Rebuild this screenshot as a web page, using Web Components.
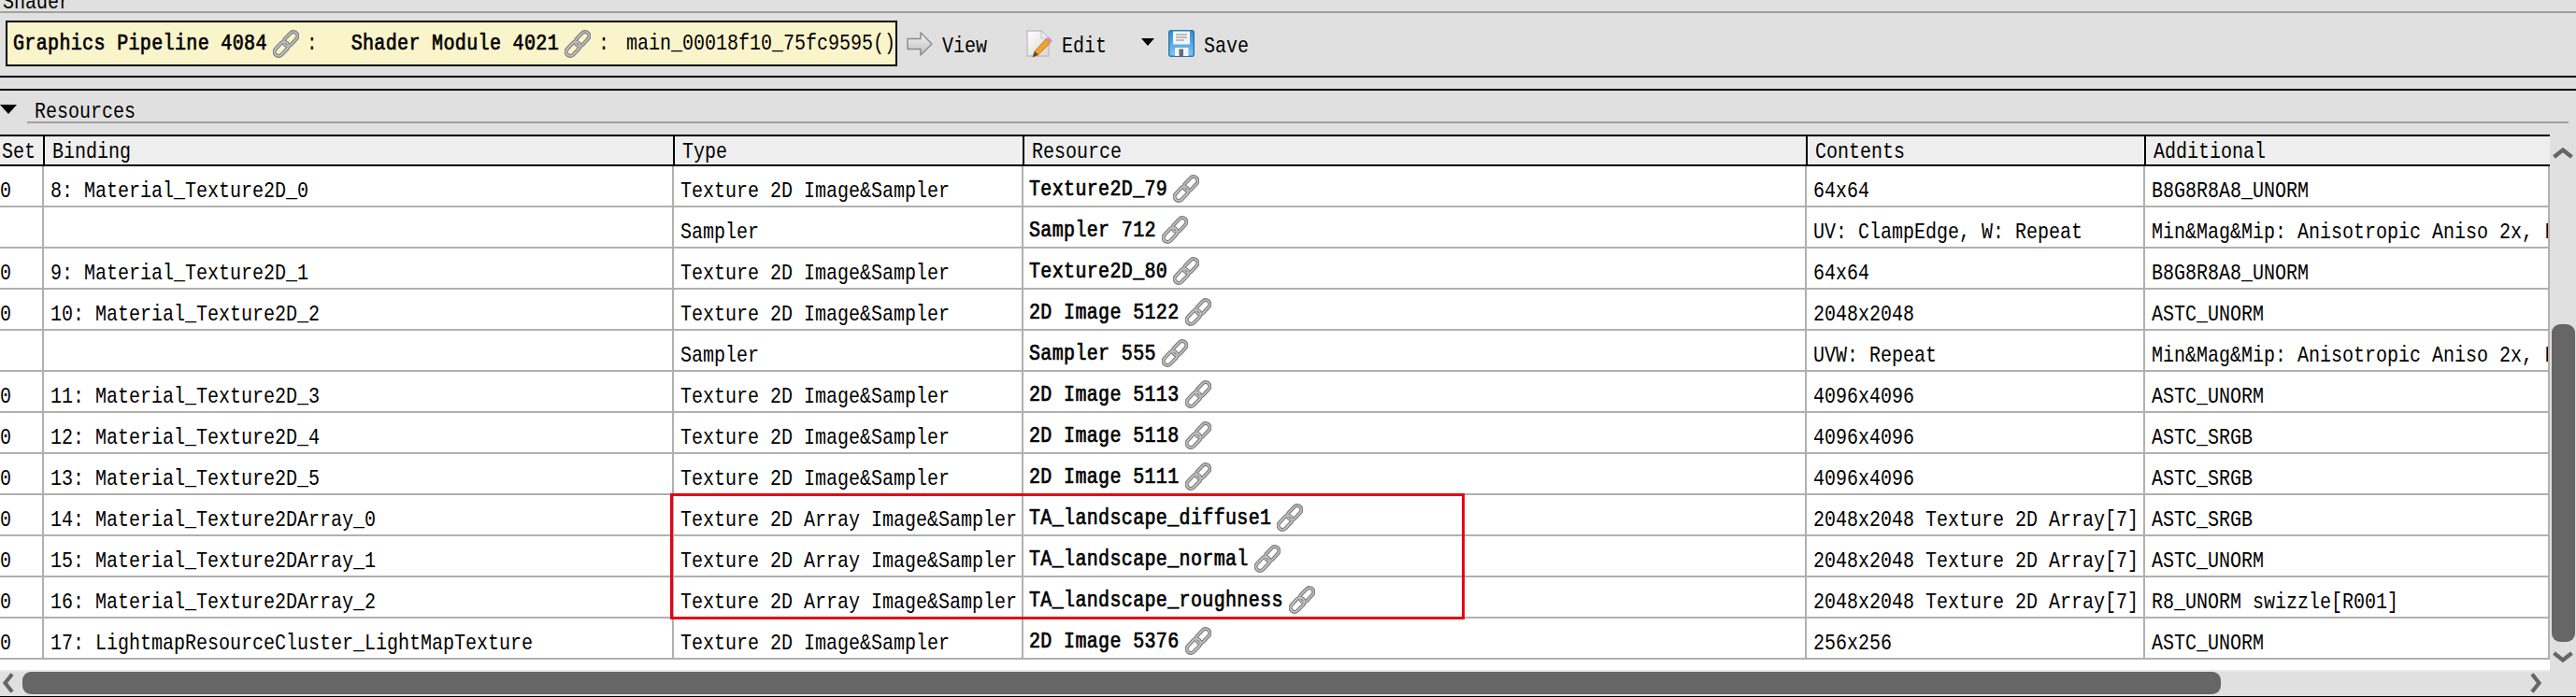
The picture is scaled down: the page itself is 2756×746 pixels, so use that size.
<!DOCTYPE html>
<html>
<head>
<meta charset="utf-8">
<style>
html,body{margin:0;padding:0;width:2756px;height:746px;overflow:hidden;background:#e0e0e0;}
body{font:20px "Liberation Mono",monospace;color:#000;}
</style>
</head>
<body>
<shader-panel>
  <shader-toolbar></shader-toolbar>
  <section-title>Resources</section-title>
  <resource-table></resource-table>
</shader-panel>
<script>
// text is drawn 20px wide and stretched, the mono fonts here are wider than the original one
const text_css = `
.t{display:inline-block;transform:scaleY(1.2);transform-origin:0 100%;white-space:pre;line-height:20px;}
.b{-webkit-text-stroke:.6px #000;letter-spacing:.35px;}
`;

class ChainIcon extends HTMLElement{
    constructor(){
        super();
        this.attachShadow({mode:'open'}).innerHTML = `
<style>
:host{display:inline-block;width:28px;height:30px;flex:none;}
svg{display:block;}
</style>
<svg width="28" height="30" viewBox="0 0 28 30">
  <g fill="none" transform="rotate(-47 14 15)">
    <rect x="-2" y="10.500" width="17.500" height="9" rx="4.500" stroke="#7c7c7c" stroke-width="4"/>
    <rect x="12.500" y="10.500" width="17.500" height="9" rx="4.500" stroke="#7c7c7c" stroke-width="4"/>
    <rect x="-2" y="10.500" width="17.500" height="9" rx="4.500" stroke="#c4c4c4" stroke-width="1.800"/>
    <rect x="12.500" y="10.500" width="17.500" height="9" rx="4.500" stroke="#bdbdbd" stroke-width="1.800"/>
  </g>
</svg>`;
    }
}
customElements.define('chain-icon', ChainIcon);

class ToolButton extends HTMLElement{
    constructor(){
        super();
        this.attachShadow({mode:'open'}).innerHTML = `
<style>
${text_css}
:host{display:flex;align-items:center;gap:10px;height:49px;}
.t{position:relative;top:5px;}
</style>
<slot name="icon"></slot><span class="t"><slot></slot></span>`;
    }
}
customElements.define('tool-button', ToolButton);

class ShaderToolbar extends HTMLElement{
    constructor(){
        super();
        this.attachShadow({mode:'open'}).innerHTML = `
<style>
${text_css}
:host{display:block;box-sizing:border-box;border-top:2px solid #a0a0a0;margin-top:12px;height:71px;border-bottom:2px solid #000;}
.bar{display:flex;align-items:center;padding:8px 0 0 6px;height:49px;}
.box{display:flex;align-items:center;box-sizing:border-box;width:954px;height:49px;background:#faf4cb;border:2px solid #000;padding-left:6px;}
.box .t{position:relative;top:2px;}
.box chain-icon{margin-left:6px;}
.colon{margin-left:8px;width:48px;}
.colon.two{width:30px;}
svg{display:block;}
.view{margin-left:10px;}
.edit{margin-left:42px;}
.drop{width:0;height:0;border:7px solid transparent;border-top:8px solid #000;border-bottom:0;margin:-4px 0 0 37px;}
.save{margin-left:15px;}
</style>
<div class="bar">
  <div class="box">
    <span class="t b">Graphics Pipeline 4084</span><chain-icon></chain-icon>
    <span class="t colon">:</span><span class="t b">Shader Module 4021</span><chain-icon></chain-icon>
    <span class="t colon two">:</span><span class="t">main_00018f10_75fc9595()</span>
  </div>
  <tool-button class="view"><svg slot="icon" width="28" height="26" viewBox="0 0 28 26"><defs><linearGradient id="av" x1="0" y1="0" x2="0" y2="1"><stop offset="0" stop-color="#f6f6f6"/><stop offset="1" stop-color="#bcbcbc"/></linearGradient></defs><path d="M1 7.500H15V1L27 13L15 25V18.500H1Z" fill="url(#av)" stroke="#8a8a8a" stroke-width="1.400" stroke-linejoin="round"/></svg>View</tool-button>
  <tool-button class="edit"><svg slot="icon" width="28" height="30" viewBox="0 0 28 30"><defs><linearGradient id="pg" x1="0" y1="0" x2="1" y2="1"><stop offset="0" stop-color="#fff"/><stop offset="1" stop-color="#d8d8d8"/></linearGradient></defs><path d="M1 1H16L24 9V28H1Z" fill="url(#pg)" stroke="#c0c0c0" stroke-width="1.400"/><path d="M16 1V9H24Z" fill="#ececec" stroke="#c0c0c0" stroke-width="1"/><path d="M7 29L9 23L21 10L25.500 14L13 26.500Z" fill="#f2a52a" stroke="#b9791a" stroke-width="1"/><path d="M21 10L23.500 7.500L28 11.500L25.500 14Z" fill="#d88cc4"/><path d="M7 29L9 23L13 26.500Z" fill="#5a4a3a"/></svg>Edit</tool-button>
  <div class="drop"></div>
  <tool-button class="save"><svg slot="icon" width="28" height="29" viewBox="0 0 28 29"><defs><linearGradient id="fl" x1="0" y1="0" x2="0" y2="1"><stop offset="0" stop-color="#2f8fd4"/><stop offset="1" stop-color="#7fc6f0"/></linearGradient></defs><rect x=".7" y=".7" width="26.600" height="27.600" rx="2" fill="url(#fl)" stroke="#2a78ad" stroke-width="1.400"/><rect x="5" y="1.500" width="18" height="14" fill="#f4f4f4"/><path d="M8 5H20M8 8H20M8 11H17" stroke="#858585" stroke-width="1"/><rect x="7" y="19" width="14.500" height="9" fill="#eef5fa"/><rect x="11.500" y="20.500" width="4.500" height="7.500" fill="#6b6b6b"/></svg>Save</tool-button>
</div>`;
    }
}
customElements.define('shader-toolbar', ShaderToolbar);

class SectionTitle extends HTMLElement{
    constructor(){
        super();
        this.attachShadow({mode:'open'}).innerHTML = `
<style>
${text_css}
:host{display:block;height:49px;box-sizing:border-box;margin-top:12px;border-top:2px solid #000;}
.row{display:flex;height:35px;}
.tri{width:0;height:0;border:9px solid transparent;border-top:10px solid #000;border-bottom:0;margin:15px 0 0 0;}
.lbl{margin-left:11px;flex:1;margin-right:8px;border-bottom:2px solid #a0a0a0;padding:13px 0 0 8px;height:20px;}
</style>
<div class="row"><div class="tri"></div><div class="lbl"><span class="t"><slot></slot></span></div></div>`;
    }
}
customElements.define('section-title', SectionTitle);

class ResRow extends HTMLElement{
    constructor(){
        super();
        this.attachShadow({mode:'open'});
    }
    connectedCallback(){
        const c = JSON.parse(this.getAttribute('cells'));
        const cell = (txt,i)=>{
            if(i==3) return `<div class="c res"><span class="t b">${txt}</span><chain-icon></chain-icon></div>`;
            return `<div class="c"><span class="t">${txt}</span></div>`;
        };
        this.shadowRoot.innerHTML = `
<style>
${text_css}
:host{display:grid;grid-template-columns:47px 674px 374px 838px 362px 431px;height:44px;box-sizing:border-box;border-bottom:2px solid #b0b0b0;border-right:2px solid #b0b0b0;background:#fff;overflow:hidden;}
.c{box-sizing:border-box;border-right:2px solid #b0b0b0;padding:17px 0 0 7px;overflow:hidden;height:42px;}
.c:nth-of-type(1){padding-left:0;}
.c:nth-of-type(6){border-right:0;}
.res{display:flex;padding:0 0 0 6px;align-items:flex-start;}
.res .t{margin-top:17px;}
.res chain-icon{margin:9px 0 0 6px;}
</style>
${c.map(cell).join('')}`;
    }
}
customElements.define('res-row', ResRow);

class ScrollArrow extends HTMLElement{
    connectedCallback(){
        const rot = {up:0,right:90,down:180,left:270}[this.getAttribute('dir')];
        this.attachShadow({mode:'open'}).innerHTML = `
<style>:host{display:block;width:24px;height:14px;flex:none;}svg{display:block;}</style>
<svg width="24" height="14" viewBox="0 0 24 14" style="transform:rotate(${rot}deg)"><path d="M2.500 11L12 3.500L21.500 11" fill="none" stroke="#666" stroke-width="4.200"/></svg>`;
    }
}
customElements.define('scroll-arrow', ScrollArrow);

class ResourceTable extends HTMLElement{
    constructor(){
        super();
        const std = 'Texture 2D Image&Sampler', arr = 'Texture 2D Array Image&Sampler', tex = 'Texture 2D Array[7]';
        const aniso = 'Min&Mag&Mip: Anisotropic Aniso 2x, LOD';
        const rows = [
            ['0','8: Material_Texture2D_0',std,'Texture2D_79','64x64','B8G8R8A8_UNORM'],
            ['','','Sampler','Sampler 712','UV: ClampEdge, W: Repeat',aniso],
            ['0','9: Material_Texture2D_1',std,'Texture2D_80','64x64','B8G8R8A8_UNORM'],
            ['0','10: Material_Texture2D_2',std,'2D Image 5122','2048x2048','ASTC_UNORM'],
            ['','','Sampler','Sampler 555','UVW: Repeat',aniso],
            ['0','11: Material_Texture2D_3',std,'2D Image 5113','4096x4096','ASTC_UNORM'],
            ['0','12: Material_Texture2D_4',std,'2D Image 5118','4096x4096','ASTC_SRGB'],
            ['0','13: Material_Texture2D_5',std,'2D Image 5111','4096x4096','ASTC_SRGB'],
            ['0','14: Material_Texture2DArray_0',arr,'TA_landscape_diffuse1','2048x2048 '+tex,'ASTC_SRGB'],
            ['0','15: Material_Texture2DArray_1',arr,'TA_landscape_normal','2048x2048 '+tex,'ASTC_UNORM'],
            ['0','16: Material_Texture2DArray_2',arr,'TA_landscape_roughness','2048x2048 '+tex,'R8_UNORM swizzle[R001]'],
            ['0','17: LightmapResourceCluster_LightMapTexture',std,'2D Image 5376','256x256','ASTC_UNORM']
        ];
        const body = rows.map(r=>`<res-row cells='${JSON.stringify(r.map(x=>x.replace(/&/g,'&amp;')))}'></res-row>`).join('');
        const heads = ['Set','Binding','Type','Resource','Contents','Additional'];
        this.attachShadow({mode:'open'}).innerHTML = `
<style>
${text_css}
:host{display:grid;grid-template-columns:2728px 28px;grid-template-rows:573px 28px;height:602px;box-sizing:border-box;position:relative;border-bottom:1px solid #000;}
.main{background:#fff;overflow:hidden;border-top:2px solid #000;}
.head{display:grid;grid-template-columns:48px 674px 374px 838px 362px 432px;height:32px;box-sizing:border-box;background:#efefef;border-bottom:2px solid #000;}
.head div{box-sizing:border-box;border-right:2px solid #000;padding:7px 0 0 8px;height:30px;}
.head div:first-child{padding-left:2px;}
.head div:last-child{border-right:0;}
.vbar{display:flex;flex-direction:column;align-items:center;padding-top:13px;}
.vthumb{width:25px;height:340px;margin-top:176px;background:#666;border-radius:9px;flex:none;}
.vbar scroll-arrow:last-child{margin-top:9px;}
.hbar{display:flex;align-items:flex-start;border-top:2px solid #eaeaea;box-sizing:border-box;height:28px;}
.hbar .a{width:18px;height:24px;display:flex;justify-content:center;align-items:center;flex:none;}
.hbar scroll-arrow{margin:0 -5px;}
.hthumb{width:2352px;height:24px;margin-left:6px;background:#666;border-radius:9px;flex:none;}
.hbar .end{margin-left:328px;}
.mark{position:absolute;left:717px;top:384px;width:850px;height:135px;box-sizing:border-box;border:3px solid #e60012;pointer-events:none;}
</style>
<div class="main">
  <div class="head">${heads.map(h=>`<div><span class="t">${h}</span></div>`).join('')}</div>
  ${body}
</div>
<div class="vbar"><scroll-arrow dir="up"></scroll-arrow><div class="vthumb"></div><scroll-arrow dir="down"></scroll-arrow></div>
<div class="hbar"><div class="a"><scroll-arrow dir="left"></scroll-arrow></div><div class="hthumb"></div><div class="a end"><scroll-arrow dir="right"></scroll-arrow></div></div>
<div></div>
<div class="mark"></div>`;
    }
}
customElements.define('resource-table', ResourceTable);

class ShaderPanel extends HTMLElement{
    constructor(){
        super();
        this.attachShadow({mode:'open'}).innerHTML = `
<style>
${text_css}
:host{display:block;width:2756px;height:746px;overflow:hidden;position:relative;}
.cap{height:0;padding-left:3px;}
.cap .t{position:relative;top:-7px;}
</style>
<div class="cap"><span class="t">Shader</span></div>
<slot></slot>`;
    }
}
customElements.define('shader-panel', ShaderPanel);
</script>
</body>
</html>
